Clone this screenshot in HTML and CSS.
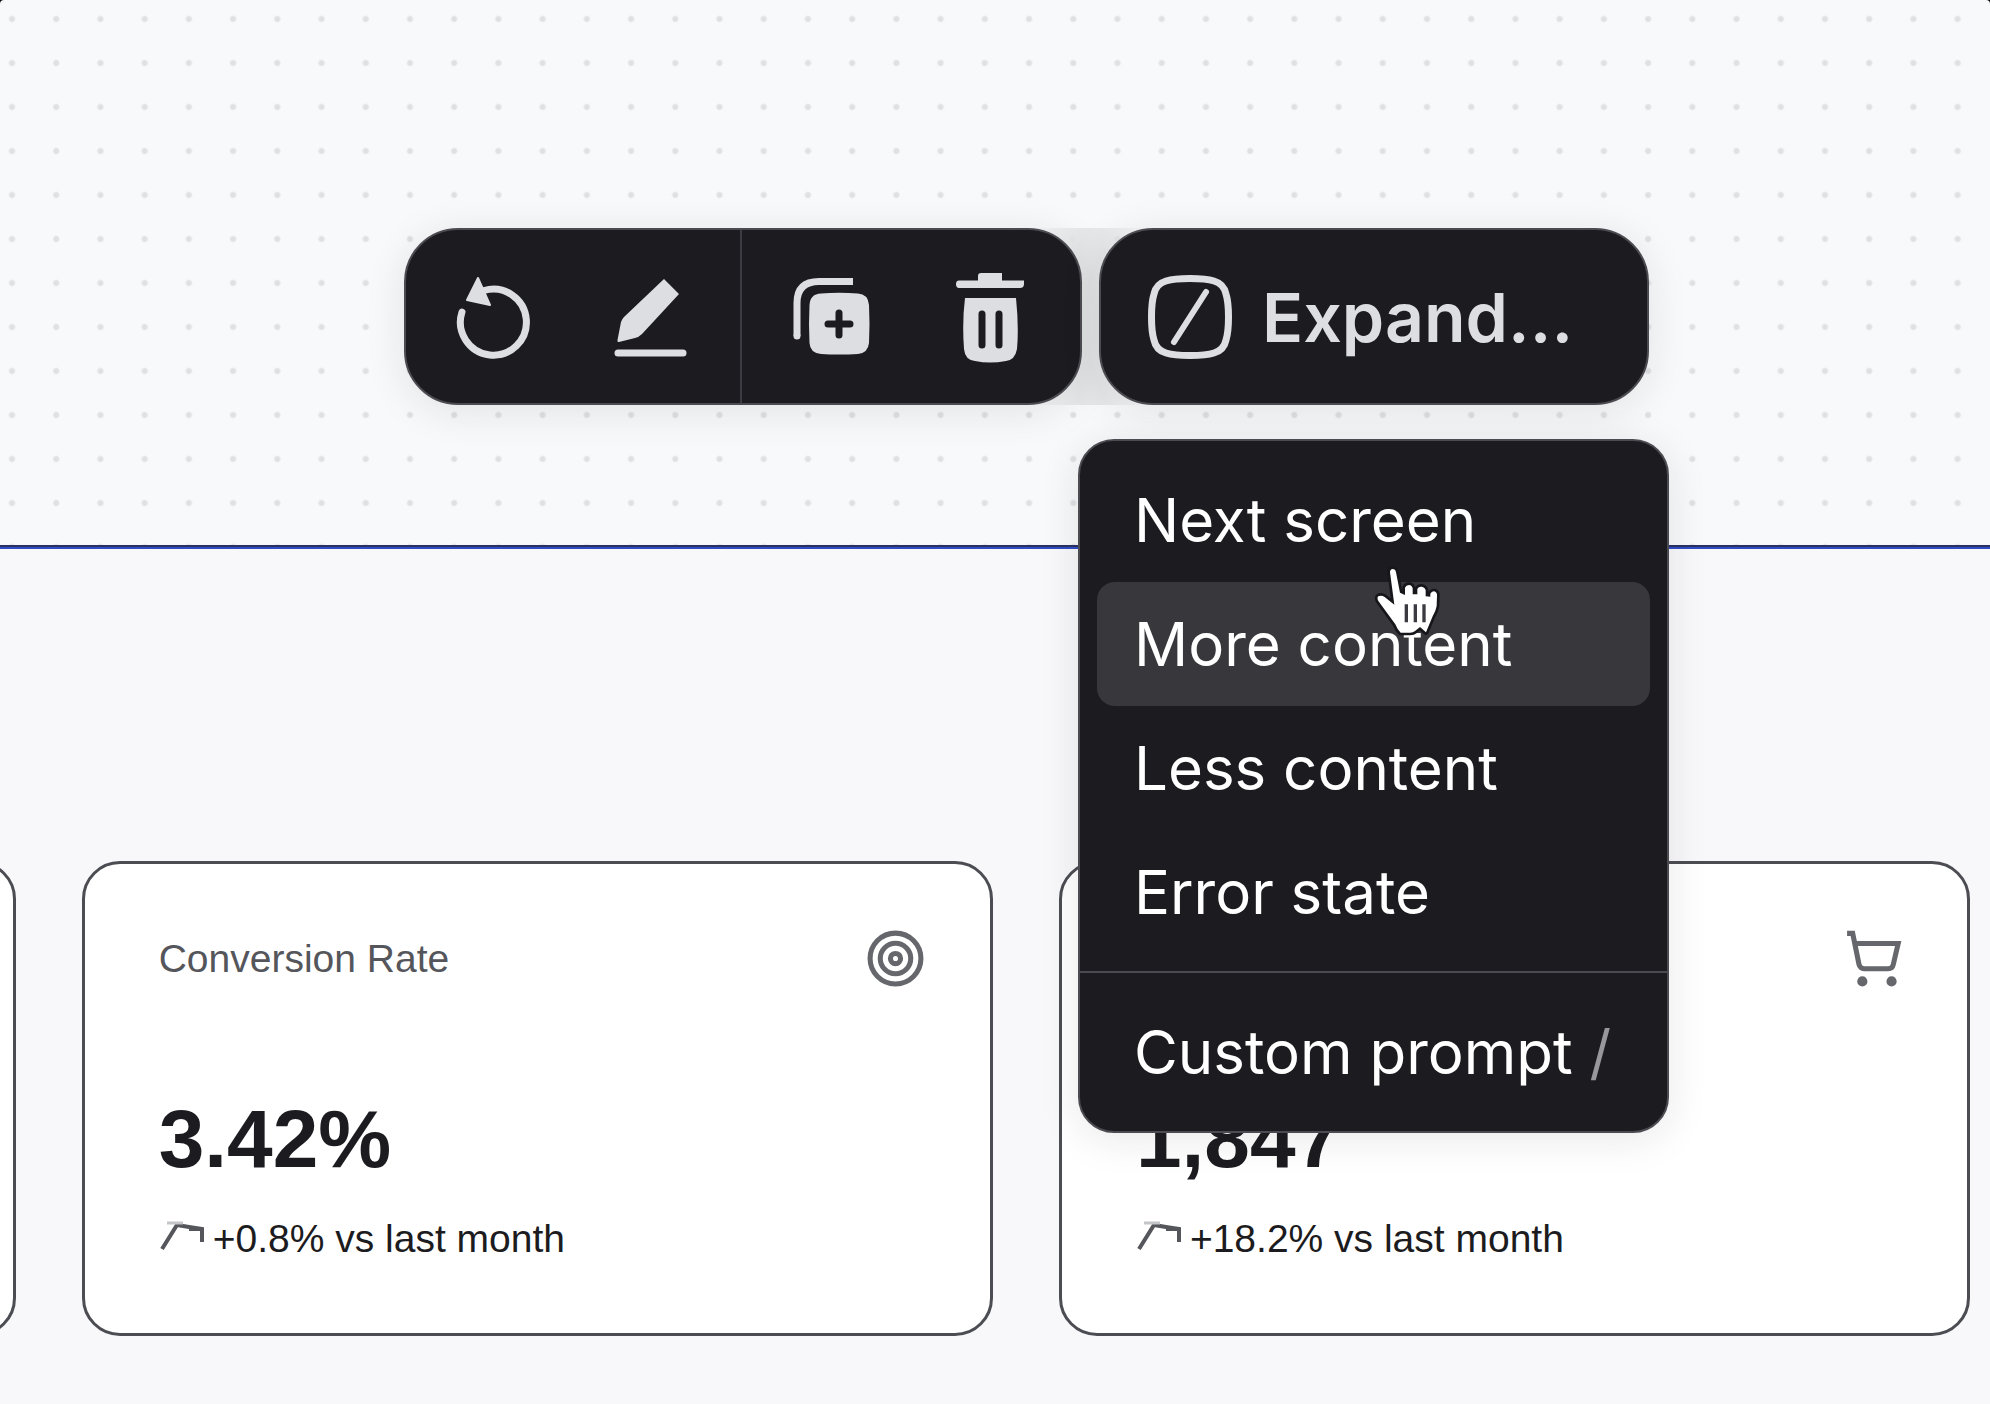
FILE: index.html
```html
<!DOCTYPE html>
<html lang="en">
<head>
  <meta charset="UTF-8" />
  <meta name="viewport" content="width=device-width, initial-scale=1.0" />
  <title>Canvas</title>
  <link rel="stylesheet" href="styles.css">
</head>
<body>
<div class="app">
  <section class="canvas">
    <div class="toolbar">
      <div class="tools">
        <div class="tool-group">
          <button type="button" class="tool" aria-label="Regenerate">
            <svg viewBox="0 0 90 92">
              <path d="M12 41A33 33 0 1 0 34 19.500" fill="none" stroke="currentColor" stroke-width="7" stroke-linecap="round"/>
              <path d="M28 7L17 29L40 34Z" fill="currentColor" stroke="currentColor" stroke-width="2" stroke-linejoin="round"/>
            </svg>
          </button>
          <button type="button" class="tool" aria-label="Edit">
            <svg viewBox="0 0 90 92">
              <path d="M57 8L72 23L35 63Q32 66 28 67L12 71Q10 71.500 10.500 69L14 51Q15 48 17 46Z" fill="currentColor"/>
              <path d="M11 82H76" stroke="currentColor" stroke-width="7" stroke-linecap="round"/>
            </svg>
          </button>
        </div>
        <div class="tool-group">
          <button type="button" class="tool" aria-label="Duplicate">
            <svg viewBox="0 0 90 92">
              <path d="M9 65V32Q9 10.500 31 10.500H65" fill="none" stroke="currentColor" stroke-width="7"/>
              <circle cx="9" cy="65" r="3.500" fill="currentColor"/>
              <path d="M33 22.500Q51 21 70 22.500Q80 23 81 34Q82 53 81 72Q80 82 70 83Q51 84 33 83Q22 82 21.500 72Q20.500 53 21.500 34Q22 23 33 22.500Z" fill="currentColor"/>
              <path d="M51 42V64M40 53H62" stroke="#1c1b20" stroke-width="7" stroke-linecap="round"/>
            </svg>
          </button>
          <button type="button" class="tool" aria-label="Delete">
            <svg viewBox="0 0 90 92">
              <path d="M11 13Q11 9.500 14 9.500H33V5Q33 2 36 2H57V9.500H79V13Q79 17 75 17H14Q11 17 11 13Z" fill="currentColor"/>
              <path d="M20 27H71Q74 56 72 78Q70 89 61 90Q45 93 30 90Q20 89 19 78Q17 51 20 27Z" fill="currentColor"/>
              <path d="M37 43V74M54 43V74" stroke="#1c1b20" stroke-width="7" stroke-linecap="round"/>
            </svg>
          </button>
        </div>
      </div>

      <div class="expand">
        <button type="button" class="expand-button" aria-expanded="true">
          <svg viewBox="0 0 84 84">
            <path d="M42 3.500Q58 3.500 66 6Q76 9 78 19Q80.500 27 80.500 42Q80.500 57 78 65Q76 75 66 78Q58 80.500 42 80.500Q26 80.500 18 78Q8 75 6 65Q3.500 57 3.500 42Q3.500 27 6 19Q8 9 18 6Q26 3.500 42 3.500Z" fill="none" stroke="currentColor" stroke-width="7"/>
            <path d="M26 67L58 17" stroke="currentColor" stroke-width="6" stroke-linecap="round"/>
          </svg>
          <span>Expand...</span>
        </button>

        <div class="menu">
          <div class="menu-group">
            <button type="button" class="menu-item">Next screen</button>
            <button type="button" class="menu-item active">More content
              <!-- mouse pointer -->
              <svg class="pointer" viewBox="0 0 300 300">
                <path d="M98 54Q106 54 108 64L120 125L135 132V110Q138 102 147 102Q156 103 158 112V130H172V114Q176 106 185 107Q195 109 197 118V136L211 137V128Q215 121 223 121Q232 124 231 135L230 165Q228 178 218 196L198 244L180 228L165 240Q160 245 150 245H122Q112 236 106 220L55 150Q50 140 55 136Q64 131 74 138L103 161L90 64Q90 55 98 54Z" fill="#fff" stroke="#17161b" stroke-width="16" stroke-linejoin="round" paint-order="stroke"/>
                <path d="M139 160V214M166 160V214M192 160V214" stroke="#3b3a40" stroke-width="10"/>
              </svg>
            </button>
            <button type="button" class="menu-item">Less content</button>
            <button type="button" class="menu-item">Error state</button>
          </div>
          <div class="menu-group">
            <button type="button" class="menu-item">Custom prompt <span class="shortcut">/</span></button>
          </div>
        </div>
      </div>
    </div>
  </section>

  <main class="screen">
    <div class="cards">
      <article class="card"></article>

      <article class="card">
        <header class="card-header">
          <h2>Conversion Rate</h2>
          <svg class="card-icon" viewBox="0 0 24 24">
            <circle cx="12" cy="12" r="10"/>
            <circle cx="12" cy="12" r="6"/>
            <circle cx="12" cy="12" r="2"/>
          </svg>
        </header>
        <p class="value">3.42%</p>
        <p class="trend">
          <svg class="trend-icon" viewBox="0 0 46 40">
            <path d="M3 30L18 6L30 8L43 10V23"/>
            <path d="M30 10H43"/>
            <path class="faint" d="M8 4H24"/>
          </svg>
          +0.8% vs last month
        </p>
      </article>

      <article class="card">
        <header class="card-header">
          <h2></h2>
          <svg class="card-icon" viewBox="0 0 24 24">
            <path d="M2 2.100h2.200l2.500 12.300a2 2 0 0 0 2 1.600h9.500a2 2 0 0 0 1.950-1.570l1.950-8.330H5.120"/>
            <circle class="wheel" cx="8" cy="21" r="2"/>
            <circle class="wheel" cx="19.500" cy="21" r="2"/>
          </svg>
        </header>
        <p class="value">1,847</p>
        <p class="trend">
          <svg class="trend-icon" viewBox="0 0 46 40">
            <path d="M3 30L18 6L30 8L43 10V23"/>
            <path d="M30 10H43"/>
            <path class="faint" d="M8 4H24"/>
          </svg>
          +18.2% vs last month
        </p>
      </article>
    </div>
  </main>
</div>
</body>
</html>
```
FILE: styles.css
```css
* {
  box-sizing: border-box;
}
html {
  background: #000;
}
body {
  margin: 0;
  font-family: "Liberation Sans", Arial, sans-serif;
  color: #1c1b20;
}
h2, p {
  margin: 0;
}
button {
  border: none;
  padding: 0;
  background: none;
  color: inherit;
  font-family: Inter, sans-serif;
  cursor: pointer;
}
.app {
  display: flex;
  flex-direction: column;
  min-height: 100vh;
  overflow: hidden;
  border-radius: 4px 4px 0 0;
  background: #f8f9fa;
}

/* Canvas with the dot grid */
.canvas {
  padding: 228px 0 140px 404px;
  background-image: radial-gradient(circle at 12px 19px, #dfe0e3 2px, transparent 4px);
  background-size: 44px 44px;
  background-repeat: round repeat;
}
.toolbar {
  position: relative;
  z-index: 1;
  display: flex;
  gap: 17px;
  width: max-content;
  color: #dddee2;
}
.tools, .expand-button, .menu {
  border: 2px solid #4c4b51;
  background: #1c1b20;
  box-shadow: 0 6px 40px rgba(28, 27, 32, 0.1);
}
.tools {
  display: flex;
  height: 177px;
  border-radius: 54px;
}
.tool-group {
  display: flex;
  padding: 0 10px;
}
.tool-group + .tool-group {
  padding: 0 12px;
  border-left: 2px solid #3c3b41;
}
.tool {
  display: flex;
  align-items: center;
  justify-content: center;
  width: 157px;
}
.tool svg {
  width: 90px;
  height: 92px;
}
.expand {
  position: relative;
}
/* fills the gap between the two pills */
.expand::before {
  content: "";
  position: absolute;
  z-index: -1;
  top: 0;
  bottom: 0;
  left: -68px;
  width: 120px;
  background: linear-gradient(90deg, transparent, #e6e7e9 40%, #e6e7e9 60%, transparent);
}
.expand-button {
  display: flex;
  align-items: center;
  gap: 30px;
  width: 550px;
  height: 177px;
  padding-left: 47px;
  border-radius: 54px;
  font-size: 68px;
  font-weight: 600;
}
.expand-button svg {
  width: 84px;
  height: 84px;
}

.menu {
  position: absolute;
  top: calc(100% + 34px);
  left: -21px;
  width: 591px;
  border-radius: 36px;
  color: #fff;
}
.menu-group {
  padding: 17px;
}
.menu-group + .menu-group {
  border-top: 2px solid #4c4b51;
}
.menu-item {
  position: relative;
  display: block;
  width: 100%;
  padding: 32px 37px;
  border-radius: 18px;
  font-size: 60px;
  line-height: 60px;
  text-align: left;
  white-space: nowrap;
}
.menu-item.active {
  background: #38373c;
}
.shortcut {
  color: #98979c;
}
.pointer {
  position: absolute;
  top: -31px;
  left: 263px;
  width: 100px;
  height: 100px;
}

/* Generated screen */
.screen {
  flex: 1;
  padding: 314px 0 66px;
  border-top: 2px solid #2a3263;
  box-shadow: inset 0 2px #2f4cc4;
  background: #f8f8fb;
}
.cards {
  display: grid;
  grid-template-columns: repeat(3, 1fr);
  gap: 66px;
  margin: 0 1% 0 -45%;
}
.card {
  padding: 64px 64px 66px 74px;
  border: 3px solid #4c4d53;
  border-radius: 38px;
  background: #fff;
}
.card-header {
  display: flex;
  align-items: center;
  justify-content: space-between;
}
.card-header h2 {
  color: #55565b;
  font-size: 39px;
  font-weight: 400;
  line-height: 56px;
}
.card-icon {
  width: 61px;
  height: 61px;
  fill: none;
  stroke: #66676c;
  stroke-width: 2;
}
.card-icon .wheel {
  fill: #66676c;
  stroke: none;
}
.value {
  margin-top: 102px;
  font-size: 82px;
  font-weight: 700;
  line-height: 96px;
}
.trend {
  display: flex;
  align-items: center;
  gap: 8px;
  margin-top: 24px;
  font-size: 39px;
  line-height: 56px;
}
.trend-icon {
  width: 46px;
  height: 40px;
  fill: none;
  stroke: #55565b;
  stroke-width: 4;
}
.trend-icon .faint {
  stroke: #c4c5c8;
  stroke-width: 3;
}
```
